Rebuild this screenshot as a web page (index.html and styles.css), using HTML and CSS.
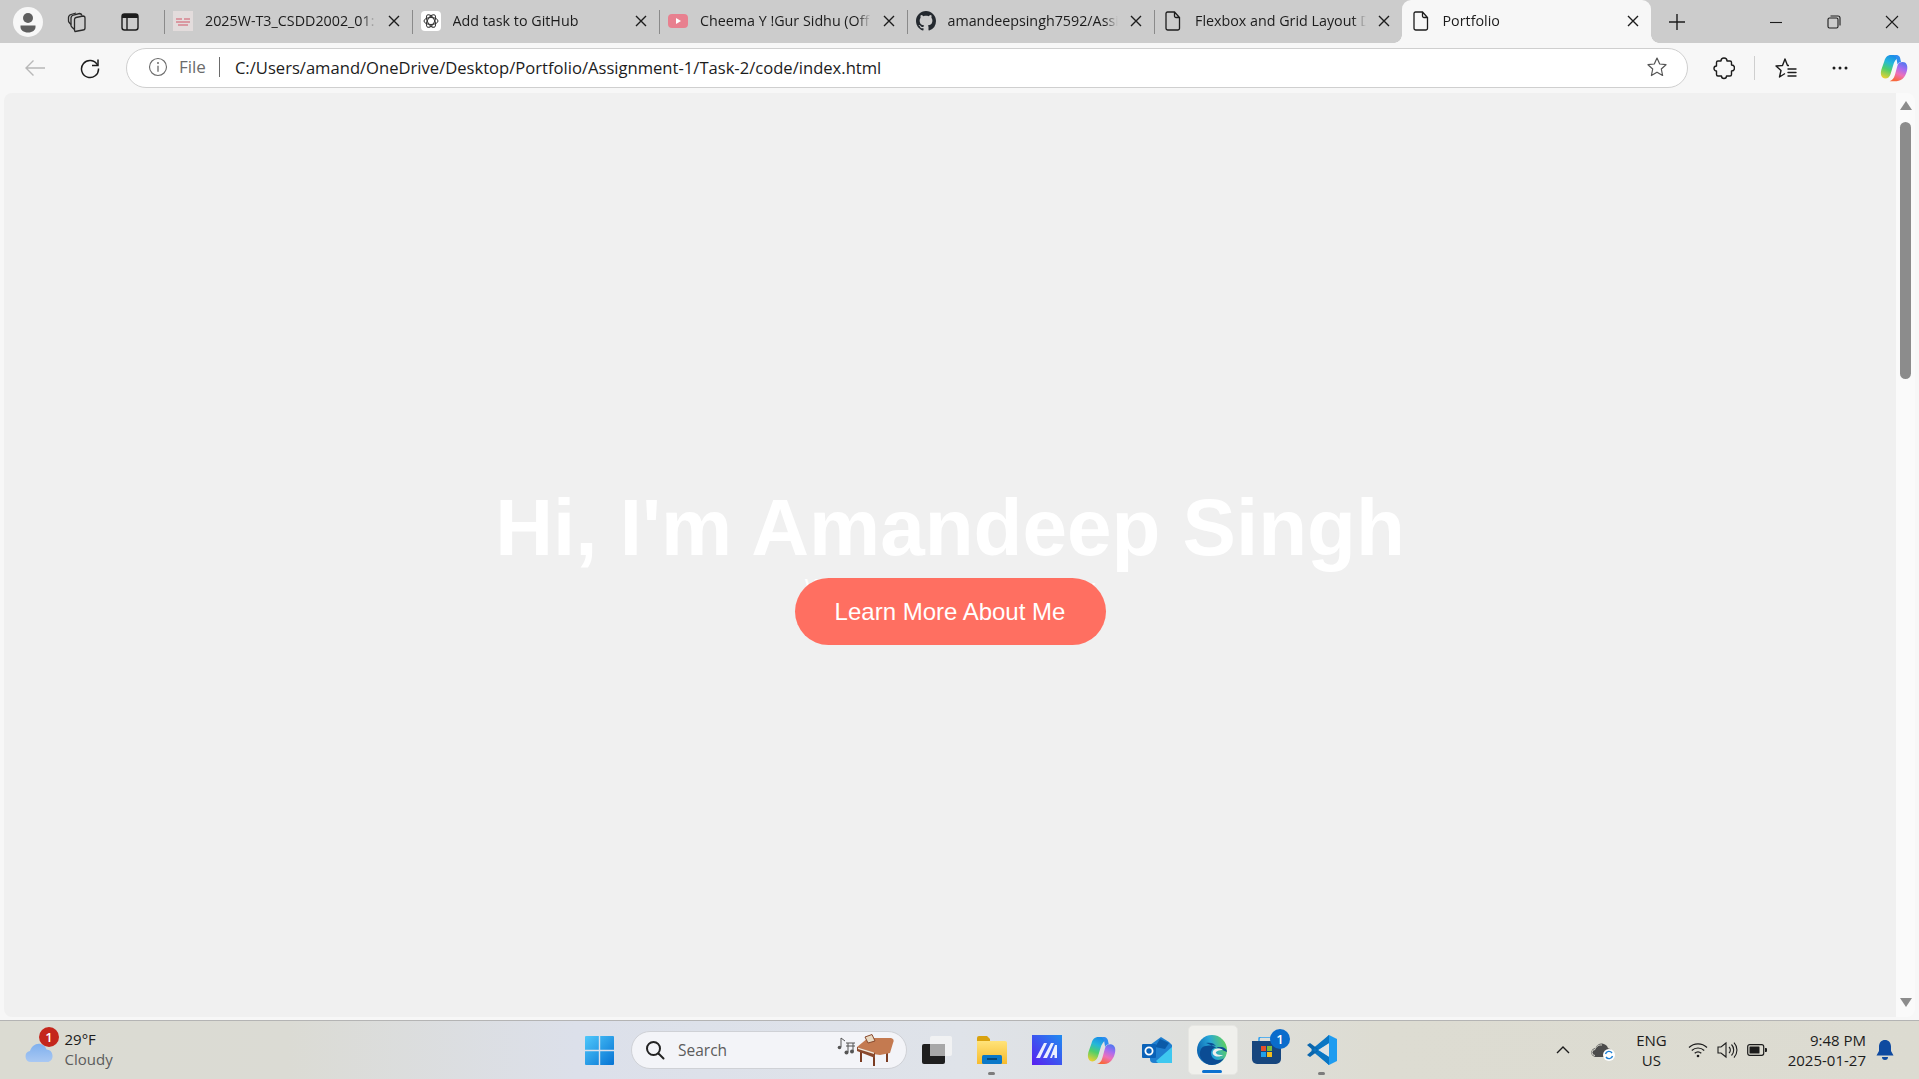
FILE: index.html
```html
<!DOCTYPE html>
<html lang="en">

<head>
    <meta charset="UTF-8">
    <title>Portfolio</title>
    <link rel="stylesheet" href="styles.css">
</head>

<body>
    <svg class="defs" width="0" height="0">
        <defs>
            <symbol id="doc" viewBox="0 0 16 20">
                <path d="M2.500 1h7l5 5.500v10.700a1.800 1.800 0 0 1-1.800 1.800H2.800A1.800 1.800 0 0 1 1 17.200V2.500A1.500 1.500 0 0 1 2.500 1zM9.500 1v4a1.500 1.500 0 0 0 1.500 1.500h3.500" fill="none" stroke="#1c1c1c" stroke-width="1.300" />
            </symbol>
            <symbol id="close" viewBox="0 0 12 12">
                <path d="M1 1l10 10M11 1L1 11" stroke="#1c1c1c" stroke-width="1.400" fill="none" />
            </symbol>
            <linearGradient id="copA" x1="0.500" y1="0" x2="0.200" y2="1">
                <stop offset="0" stop-color="#1a8fe8" />
                <stop offset="0.300" stop-color="#25b8d8" />
                <stop offset="0.600" stop-color="#4fcf6a" />
                <stop offset="1" stop-color="#f0d030" />
            </linearGradient>
            <linearGradient id="copB" x1="0.800" y1="0" x2="0.400" y2="1">
                <stop offset="0" stop-color="#4a78f0" />
                <stop offset="0.350" stop-color="#a86cf0" />
                <stop offset="0.650" stop-color="#ee70b8" />
                <stop offset="1" stop-color="#f8683a" />
            </linearGradient>
            <symbol id="copilot" viewBox="0 0 32 32">
                <path d="M13 1C8 1 6 4 5 8L1.500 18C0 24 2 28 6 28c3 0 5-2 6-5l3-10c1-4 3-7 6-9-1-2-3-3-5-3z" fill="url(#copA)" />
                <path d="M26 9c4 0 6 4 5 9-1 6-5 13-12 13h-8c3-1 5-3 6-7l3-11c1-3 3-4 6-4z" fill="url(#copB)" />
                <path d="M16 1h3c2 0 3.500 1.500 4 3.500L24 9c-2 0-3 1-4 3l-1-6c-.500-2-1.500-4-3-5z" fill="#2f8df0" />
            </symbol>
            <linearGradient id="winLogo" x1="0" y1="0" x2="1" y2="1">
                <stop offset="0" stop-color="#4fc8fb" />
                <stop offset="1" stop-color="#0673d3" />
            </linearGradient>
            <linearGradient id="edgeRing" x1="0" y1="0.600" x2="1" y2="0.300">
                <stop offset="0" stop-color="#0d63b0" />
                <stop offset="0.500" stop-color="#27a6d8" />
                <stop offset="1" stop-color="#63d25a" />
            </linearGradient>
            <linearGradient id="folder" x1="0" y1="0" x2="0" y2="1">
                <stop offset="0" stop-color="#ffe37a" />
                <stop offset="1" stop-color="#f7bb2c" />
            </linearGradient>
            <linearGradient id="genApp" x1="1" y1="0" x2="0" y2="1">
                <stop offset="0" stop-color="#1f8cf0" />
                <stop offset="1" stop-color="#5a1ff0" />
            </linearGradient>
            <linearGradient id="cloudFill" x1="0" y1="0" x2="0" y2="1">
                <stop offset="0" stop-color="#7fb0ee" />
                <stop offset="1" stop-color="#a9c8f3" />
            </linearGradient>
        </defs>
    </svg>

    <header class="tabstrip">
        <div class="avatar">
            <svg width="30" height="30" viewBox="0 0 30 30">
                <circle cx="15" cy="15" r="15" fill="#f7f7f7" />
                <circle cx="15" cy="11" r="5" fill="#5f5f5f" />
                <path d="M7.500 18.500h15v1.500c0 3-3 5.500-7.500 5.500S7.500 23 7.500 20z" fill="#5f5f5f" />
            </svg>
        </div>
        <div class="strip-btn">
            <svg width="22" height="22" viewBox="0 0 22 22" fill="none" stroke="#2a2a2a" stroke-width="1.300">
                <path d="M9 20.500l8-1.500a2 2 0 0 0 2-2V7a2 2 0 0 0-2-2l-7 1.500a2 2 0 0 0-1.500 2v10.500c0 1 .500 1.500.500 1.500z" />
                <path d="M8.500 18.500L5.800 16a2 2 0 0 1-.800-1.500V7c0-2 1-2.500 2.500-3l6-1.500c1.500 0 2 .500 2.500 2" />
                <path d="M5 13.500l-2-2.300a2 2 0 0 1-.500-1.500V6.500c0-1.500 1-2.500 2.500-3l5-1.500" />
            </svg>
        </div>
        <div class="strip-btn">
            <svg width="20" height="20" viewBox="0 0 20 20">
                <rect x="2" y="2" width="16" height="16" rx="2.500" fill="none" stroke="#1c1c1c" stroke-width="1.400" />
                <path d="M2 4.500A2.500 2.500 0 0 1 4.500 2h11A2.500 2.500 0 0 1 18 4.500V6H2z" fill="#1c1c1c" />
                <path d="M7 6v12" stroke="#1c1c1c" stroke-width="1.400" />
            </svg>
        </div>

        <div class="tab">
            <svg class="favicon" width="20" height="20" viewBox="0 0 20 20">
                <rect width="20" height="20" fill="#e3dcdc" />
                <path d="M3 8h6M11 8h6M3 11h14M5 14h10" stroke="#d8838f" stroke-width="1.300" />
            </svg>
            <span class="tab-title">2025W-T3_CSDD2002_01:</span>
            <svg class="tab-close"><use href="#close" /></svg>
        </div>
        <div class="tab">
            <svg class="favicon" width="20" height="20" viewBox="0 0 20 20">
                <rect width="20" height="20" rx="4" fill="#fff" />
                <g fill="none" stroke="#333" stroke-width="1">
                    <ellipse cx="10" cy="10" rx="7" ry="3.500" />
                    <ellipse cx="10" cy="10" rx="7" ry="3.500" transform="rotate(60 10 10)" />
                    <ellipse cx="10" cy="10" rx="7" ry="3.500" transform="rotate(120 10 10)" />
                </g>
            </svg>
            <span class="tab-title">Add task to GitHub</span>
            <svg class="tab-close"><use href="#close" /></svg>
        </div>
        <div class="tab">
            <svg class="favicon" width="20" height="20" viewBox="0 0 20 20">
                <rect y="3" width="20" height="14" rx="4" fill="#e8808f" />
                <path d="M8 7l5 3-5 3z" fill="#fff" />
            </svg>
            <span class="tab-title">Cheema Y !Gur Sidhu (Off</span>
            <svg class="tab-close"><use href="#close" /></svg>
        </div>
        <div class="tab">
            <svg class="favicon" width="20" height="20" viewBox="0 0 16 16">
                <path fill="#24292f" d="M8 0C3.580 0 0 3.580 0 8c0 3.540 2.290 6.530 5.470 7.590.4.070.55-.17.55-.38 0-.19-.01-.82-.01-1.490-2.010.37-2.530-.49-2.690-.94-.09-.23-.48-.94-.82-1.130-.28-.15-.68-.52-.01-.53.63-.01 1.080.58 1.230.82.72 1.210 1.870.87 2.330.66.07-.52.28-.87.51-1.070-1.780-.2-3.640-.89-3.640-3.950 0-.87.31-1.590.82-2.150-.08-.2-.36-1.020.08-2.120 0 0 .67-.21 2.200.82.64-.18 1.320-.27 2-.27.68 0 1.360.09 2 .27 1.530-1.040 2.200-.82 2.200-.82.44 1.100.16 1.920.08 2.120.51.56.82 1.270.82 2.150 0 3.070-1.870 3.750-3.650 3.950.29.25.54.73.54 1.480 0 1.070-.01 1.930-.01 2.200 0 .21.15.46.55.38A8.013 8.013 0 0016 8c0-4.420-3.580-8-8-8z" />
            </svg>
            <span class="tab-title">amandeepsingh7592/Assi</span>
            <svg class="tab-close"><use href="#close" /></svg>
        </div>
        <div class="tab">
            <svg class="favicon doc-icon"><use href="#doc" /></svg>
            <span class="tab-title">Flexbox and Grid Layout D</span>
            <svg class="tab-close"><use href="#close" /></svg>
        </div>
        <div class="tab active">
            <svg class="favicon doc-icon"><use href="#doc" /></svg>
            <span class="tab-title">Portfolio</span>
            <svg class="tab-close"><use href="#close" /></svg>
        </div>

        <div class="new-tab">
            <svg width="18" height="18" viewBox="0 0 18 18">
                <path d="M9 1v16M1 9h16" stroke="#1c1c1c" stroke-width="1.400" />
            </svg>
        </div>

        <div class="window-btns">
            <svg width="14" height="14" viewBox="0 0 14 14">
                <path d="M1 7.500h12" stroke="#1c1c1c" stroke-width="1.100" />
            </svg>
            <svg width="14" height="14" viewBox="0 0 14 14" fill="none" stroke="#1c1c1c" stroke-width="1.100">
                <rect x="1" y="3" width="10" height="10" rx="1.500" />
                <path d="M3.500 1h7.500a2 2 0 0 1 2 2v7.500" />
            </svg>
            <svg width="14" height="14" viewBox="0 0 14 14">
                <path d="M1 1l12 12M13 1L1 13" stroke="#1c1c1c" stroke-width="1.100" />
            </svg>
        </div>
    </header>

    <div class="toolbar">
        <div class="nav-btn back">
            <svg width="22" height="18" viewBox="0 0 22 18" fill="none" stroke="#b8b8b8" stroke-width="1.400">
                <path d="M21 9H2M9.500 1.500L2 9l7.500 7.500" />
            </svg>
        </div>
        <div class="nav-btn reload">
            <svg width="22" height="22" viewBox="0 0 22 22" fill="none" stroke="#1c1c1c" stroke-width="1.500">
                <path d="M18.500 8A8.500 8.500 0 1 0 19.500 11.500" />
                <path d="M19 2.500V8.500H13" />
            </svg>
        </div>
        <div class="address">
            <svg class="info" width="20" height="20" viewBox="0 0 20 20">
                <circle cx="10" cy="10" r="8.500" fill="none" stroke="#6b6b6b" stroke-width="1.100" />
                <path d="M10 8.800v6" stroke="#6b6b6b" stroke-width="1.300" />
                <circle cx="10" cy="6" r="1" fill="#6b6b6b" />
            </svg>
            <span class="scheme">File</span>
            <span class="url">C:/Users/amand/OneDrive/Desktop/Portfolio/Assignment-1/Task-2/code/index.html</span>
            <svg class="star" width="22" height="22" viewBox="0 0 22 22">
                <path d="M11 2l2.700 6 6.300.7-4.700 4.300 1.300 6.500-5.600-3.300-5.600 3.300 1.300-6.500L2 8.700 8.300 8z" fill="none" stroke="#555" stroke-width="1.200" stroke-linejoin="round" />
            </svg>
        </div>
        <div class="tool extensions">
            <svg width="22" height="24" viewBox="0 0 22 24" fill="none" stroke="#1c1c1c" stroke-width="1.400" stroke-linejoin="round">
                <path d="M8 5a3 3 0 0 1 6 0h3a1.500 1.500 0 0 1 1.500 1.500V9a3 3 0 0 1 0 6v3.500A1.500 1.500 0 0 1 17 20h-3.500a2.500 2.500 0 0 1-5 0H5a1.500 1.500 0 0 1-1.500-1.500V15a2.500 2.500 0 0 1 0-5V6.500A1.500 1.500 0 0 1 5 5z" />
            </svg>
        </div>
        <span class="tool-sep"></span>
        <div class="tool favorites">
            <svg width="24" height="24" viewBox="0 0 24 24" fill="none" stroke="#1c1c1c" stroke-width="1.400" stroke-linejoin="round">
                <path d="M15 9.500h-1.500L11 3 8.500 9.500 2 10l5 4.500L5.500 21l5.500-3.500" />
                <path d="M14 13h8M14 16.500h8M14 20h8" stroke-linecap="round" />
            </svg>
        </div>
        <div class="tool more">
            <svg width="18" height="6" viewBox="0 0 18 6" fill="#1c1c1c">
                <circle cx="3" cy="3" r="1.500" />
                <circle cx="9" cy="3" r="1.500" />
                <circle cx="15" cy="3" r="1.500" />
            </svg>
        </div>
        <div class="tool">
            <svg width="28" height="30"><use href="#copilot" /></svg>
        </div>
    </div>

    <div class="viewport">
        <main class="hero">
            <h1>Hi, I'm Amandeep Singh</h1>
            <p class="tagline">Web Developer &amp; Designer</p>
            <button class="cta">Learn More About Me</button>
        </main>
        <div class="scrollbar">
            <span class="arrow up"></span>
            <span class="thumb"></span>
            <span class="arrow down"></span>
        </div>
    </div>

    <footer class="taskbar">
        <div class="weather">
            <div class="weather-icon">
                <svg width="30" height="22" viewBox="0 0 30 22">
                    <path d="M6 21a5.500 5.500 0 0 1-1-10.900C6.500 5 11 2 15.500 3c3 .6 5 2.500 6 5.500a6.500 6.500 0 0 1 2 12.500z" fill="url(#cloudFill)" />
                </svg>
                <span class="weather-badge">1</span>
            </div>
            <div class="weather-text">
                <span class="temp">29°F</span>
                <span class="sky">Cloudy</span>
            </div>
        </div>

        <div class="center">
            <svg class="start" width="29" height="29" viewBox="0 0 29 29" fill="url(#winLogo)">
                <path d="M1 0h12.800v13.800H0V1a1 1 0 0 1 1-1zM15.200 0H28a1 1 0 0 1 1 1v12.800H15.200zM0 15.200h13.800V29H1a1 1 0 0 1-1-1zM15.200 15.200H29V28a1 1 0 0 1-1 1H15.200z" />
            </svg>
            <div class="search">
                <svg width="20" height="20" viewBox="0 0 20 20" fill="none" stroke="#222" stroke-width="2">
                    <circle cx="8.500" cy="8.500" r="6.500" />
                    <path d="M13.500 13.500l5 5" stroke-linecap="round" />
                </svg>
                <span class="search-label">Search</span>
                <svg class="piano" width="60" height="34" viewBox="0 0 60 34">
                    <g fill="none" stroke="#555" stroke-width="1">
                        <path d="M6 14V5l4 3M11 10h9M11 13h9M13 10v9M18 10v8" />
                    </g>
                    <circle cx="4.500" cy="14.500" r="1.800" fill="#555" />
                    <circle cx="11.500" cy="19.500" r="2" fill="#555" />
                    <circle cx="17" cy="18.500" r="2" fill="#555" />
                    <path d="M26 18v11M39 23v10M52 20v9" stroke="#7b3c22" stroke-width="2" />
                    <path d="M22 14L33 5h23q4 1 2 5l-3 10-10 2-7-1-16-4z" fill="#c47a50" />
                    <path d="M22 14l18 6v5L22 18z" fill="#8a4a2e" />
                    <path d="M23 14.500l16 5v1.500l-16-5z" fill="#f0e6d8" />
                    <path d="M30 4l7-2.500L40 8l-7 2z" fill="#e8d9c2" stroke="#8a4a2e" stroke-width="1" />
                </svg>
            </div>
            <div class="apps">
                <div class="app">
                    <svg width="30" height="28" viewBox="0 0 30 28">
                        <rect y="8" width="23" height="20" rx="2" fill="#1f1f1f" />
                        <rect x="8" width="22" height="20" rx="2" fill="#f4f4f4" fill-opacity="0.850" />
                        <rect x="8" y="8" width="15" height="12" fill="#a8a8a8" />
                    </svg>
                </div>
                <div class="app running">
                    <svg width="30" height="28" viewBox="0 0 30 28">
                        <path d="M0 2a2 2 0 0 1 2-2h8l3 3h0v3H0z" fill="#d9a20f" />
                        <path d="M0 5h28a2 2 0 0 1 2 2v21H0z" fill="url(#folder)" />
                        <rect x="5" y="19" width="20" height="9" rx="1.500" fill="#0b78c8" />
                        <path d="M10 23h10" stroke="#08395f" stroke-width="1.500" />
                    </svg>
                </div>
                <div class="app">
                    <svg width="30" height="30" viewBox="0 0 30 30">
                        <rect width="30" height="30" fill="url(#genApp)" />
                        <path d="M4 23L12 8h3L8 23zM11 23l8-15h3L15 23zM18 23l5-13h2v13h-2.500v-3h-1.500l-1 3z" fill="#fff" opacity="0.900" />
                    </svg>
                </div>
                <div class="app">
                    <svg width="31" height="29"><use href="#copilot" /></svg>
                </div>
                <div class="app">
                    <svg width="30" height="26" viewBox="0 0 30 26">
                        <path d="M8 8l11-8 8 5 3 3v18H12a4 4 0 0 1-4-4z" fill="#1f7fd0" />
                        <path d="M18 2l9 4-4 6-10-2z" fill="#0b5aa8" />
                        <path d="M14 24l16-14v16H16z" fill="#3ec8f0" />
                        <rect y="7" width="14" height="14" rx="1" fill="#0a62b8" />
                        <circle cx="7" cy="14" r="3.600" fill="none" stroke="#fff" stroke-width="1.800" />
                    </svg>
                </div>
                <div class="app edge">
                    <svg width="30" height="30" viewBox="0 0 30 30">
                        <circle cx="15" cy="15" r="15" fill="url(#edgeRing)" />
                        <path d="M30 17c0-3-3-5-7-5-5 0-9 2-9 6 0 4 3 7 7 7 3 0 5-1 6-2-2 4-7 7-12 7-2 0-4-.500-6-1.500C4 25 1 20 4 14c1-2 3-3 5-3 4-1 8-1 10 0-2-3-6-4-10-3" fill="#0b4c94" />
                        <path d="M26 15c-3-2-8-2-10 1-1 2 0 4 2 5 3 1 6 .500 8-1-3 0-6 0-7-2-1-1.500 3-3 7-3z" fill="#f0f0ec" />
                    </svg>
                </div>
                <div class="app store">
                    <svg width="29" height="27" viewBox="0 0 29 27">
                        <path d="M7 5V2a2 2 0 0 1 2-2h11a2 2 0 0 1 2 2v3" fill="none" stroke="#2ea1f2" stroke-width="1.500" />
                        <path d="M0 4h29v18a5 5 0 0 1-5 5H5a5 5 0 0 1-5-5z" fill="#17467e" />
                        <rect x="9" y="9" width="5" height="5" fill="#e8502a" />
                        <rect x="15" y="9" width="5" height="5" fill="#7dbb3c" />
                        <rect x="9" y="15" width="5" height="5" fill="#21a0ea" />
                        <rect x="15" y="15" width="5" height="5" fill="#f5bc1c" />
                    </svg>
                    <span class="store-badge">1</span>
                </div>
                <div class="app running">
                    <svg width="30" height="30" viewBox="0 0 30 30">
                        <path d="M22 0l8 4v22l-8 4-14-13z" fill="#1f9cf0" />
                        <path d="M22 0v30L8 17z" fill="#1f9cf0" />
                        <path d="M22 8L11 15l11 7z" fill="#e0e2e2" />
                        <path d="M22 0L4 15l18 15 0-8L11 15 22 8z" fill="#0b75c2" />
                        <path d="M0 10l3-2 8 6-3 3zM0 20l3 2 8-6-3-3z" fill="#0a66ad" />
                    </svg>
                </div>
            </div>
        </div>

        <div class="tray">
            <svg class="chevron" width="14" height="8" viewBox="0 0 14 8">
                <path d="M1 7l6-6 6 6" fill="none" stroke="#1c1c1c" stroke-width="1.400" />
            </svg>
            <div class="onedrive">
                <svg width="21" height="14" viewBox="0 0 21 14">
                    <path d="M5 14a4.500 4.500 0 0 1-.5-9C6 1.500 9 0 12 .700c3 .7 4.500 2.500 5 4.500a4.500 4.500 0 0 1 0 8.800z" fill="#4c4c4c" />
                    <path d="M4 12.500a3 3 0 0 1 0-6c1-3 4-5 7-4.500" fill="none" stroke="#dcdcd2" stroke-width="1" />
                </svg>
                <svg class="sync" width="12" height="12" viewBox="0 0 12 12">
                    <circle cx="6" cy="6" r="6" fill="#fff" />
                    <path d="M2.500 5a3.600 3.600 0 0 1 6.500-1M9.500 7a3.600 3.600 0 0 1-6.500 1" fill="none" stroke="#1a7fd6" stroke-width="1.400" />
                </svg>
            </div>
            <div class="lang">
                <span>ENG</span>
                <span>US</span>
            </div>
            <div class="status">
                <svg width="20" height="16" viewBox="0 0 20 16" fill="none" stroke="#1c1c1c" stroke-width="1.200">
                    <path d="M1 5.500a13 13 0 0 1 18 0M3.800 8.500a9 9 0 0 1 12.400 0M6.700 11.300a5 5 0 0 1 6.600 0" />
                    <circle cx="10" cy="14" r="1.300" fill="#1c1c1c" stroke="none" />
                </svg>
                <svg width="21" height="18" viewBox="0 0 21 18" fill="none" stroke="#1c1c1c" stroke-width="1.100">
                    <path d="M1 6h3l5-4v14l-5-4H1z" />
                    <path d="M12 6a4 4 0 0 1 0 6M14.500 3.500a8 8 0 0 1 0 11M17 1.500a11 11 0 0 1 0 15" />
                </svg>
                <svg width="20" height="12" viewBox="0 0 20 12">
                    <rect x="0.700" y="0.700" width="16" height="10.600" rx="2" fill="none" stroke="#1c1c1c" stroke-width="1.200" />
                    <rect x="2.500" y="2.500" width="10" height="7" rx="0.500" fill="#1c1c1c" />
                    <path d="M18 4h1a1 1 0 0 1 1 1v2a1 1 0 0 1-1 1h-1z" fill="#1c1c1c" />
                </svg>
            </div>
            <div class="clock">
                <span>9:48 PM</span>
                <span>2025-01-27</span>
            </div>
            <svg class="bell" width="18" height="20" viewBox="0 0 18 20" fill="#0f4aa0">
                <path d="M9 0c3.500 0 6 2.700 6 6.500V11l2.500 4.500H.5L3 11V6.500C3 2.700 5.500 0 9 0z" />
                <path d="M6 17h6a3 3 0 0 1-6 0z" />
            </svg>
        </div>
    </footer>
</body>

</html>
```

FILE: styles.css
```css
* {
    box-sizing: border-box;
}

html,
body {
    height: 100%;
}

body {
    margin: 0;
    display: flex;
    flex-direction: column;
    overflow: hidden;
    font-family: "Open Sans", "Noto Sans", sans-serif;
    color: #1c1c1c;
    background-color: #f7f7f7;
}

.defs {
    position: absolute;
}

/* tab strip */
.tabstrip {
    display: flex;
    align-items: center;
    height: 43px;
    flex-shrink: 0;
    background-color: #cccccc;
}

.avatar {
    display: flex;
    margin-left: 13px;
    width: 37px;
}

.strip-btn {
    display: flex;
    justify-content: center;
    width: 53px;
}

.tab {
    position: relative;
    display: flex;
    align-items: center;
    width: 247.500px;
    height: 43px;
    padding: 0 12px 2px 9px;
    font-size: 14.300px;
}

.strip-btn + .tab {
    margin-left: 8px;
}

.tab::before {
    content: "";
    position: absolute;
    left: 0;
    top: 10px;
    width: 1px;
    height: 24px;
    background-color: #8a8a8a;
}

.favicon {
    flex-shrink: 0;
    width: 20px;
    height: 20px;
    margin-right: 12px;
}

.doc-icon {
    width: 16px;
    height: 20px;
    margin: 0 14px 0 2px;
}

.tab-title {
    flex: 1;
    overflow: hidden;
    white-space: nowrap;
    -webkit-mask-image: linear-gradient(to right, #000 92%, transparent 100%);
    mask-image: linear-gradient(to right, #000 92%, transparent 100%);
}

.tab-close {
    flex-shrink: 0;
    width: 12px;
    height: 12px;
    margin-left: 12px;
}

.tab.active {
    width: 249px;
    padding-left: 11px;
    background-color: #f7f7f7;
    border-radius: 9px 9px 0 0;
}

/* flared bottom corners of the active tab */
.tab.active::before,
.tab.active::after {
    content: "";
    position: absolute;
    top: auto;
    bottom: 0;
    width: 8px;
    height: 8px;
}

.tab.active::before {
    left: -8px;
    background: radial-gradient(circle at 0 0, transparent 7.500px, #f7f7f7 8px);
}

.tab.active::after {
    right: -8px;
    background: radial-gradient(circle at 100% 0, transparent 7.500px, #f7f7f7 8px);
}

.tab.active .doc-icon {
    margin: 0 14px 0 0;
}

.new-tab {
    display: flex;
    margin-left: 17px;
}

.window-btns {
    display: flex;
    align-items: center;
    gap: 44px;
    margin-left: auto;
    margin-right: 20px;
}

/* toolbar */
.toolbar {
    display: flex;
    align-items: center;
    height: 50px;
    flex-shrink: 0;
    background-color: #f7f7f7;
}

.nav-btn {
    display: flex;
}

.back {
    margin-left: 24px;
}

.reload {
    margin-left: 33px;
}

.address {
    display: flex;
    align-items: center;
    width: 1562px;
    height: 40px;
    margin-left: 25px;
    padding: 0 19px 2px 21px;
    background-color: #fff;
    border: 1px solid #cfcfcf;
    border-radius: 20px;
    font-size: 16.600px;
}

.scheme {
    margin-left: 11px;
    padding-right: 13px;
    border-right: 1px solid #6b6b6b;
    font-size: 17px;
    line-height: 20px;
    color: #6b6b6b;
}

.url {
    margin-left: 15px;
    white-space: nowrap;
}

.star {
    margin-left: auto;
}

.tool {
    display: flex;
    justify-content: center;
}

.extensions {
    margin-left: 25px;
}

.tool-sep {
    width: 1px;
    height: 24px;
    margin: 0 19px;
    background-color: #cfcfcf;
}

.more {
    margin: 0 31px 0 33px;
}

/* page area */
.viewport {
    display: flex;
    flex: 1;
    min-height: 0;
    margin: 0 4px 3px;
}

.hero {
    display: flex;
    flex: 1;
    flex-direction: column;
    align-items: center;
    padding: 389px 0 0;
    background-color: #f0f0f0;
    border-radius: 8px 0 0 8px;
}

.hero h1 {
    margin: 0;
    font-family: "Liberation Sans", Arial, sans-serif;
    font-size: 80px;
    font-weight: bold;
    color: #fff;
}

/* sits mostly behind the button, only its corners show */
.tagline {
    margin: 0 0 -24px;
    font-family: "Liberation Sans", Arial, sans-serif;
    font-size: 24px;
    line-height: 28px;
    color: #fff;
}

.cta {
    width: 311px;
    height: 67px;
    padding: 0;
    border: none;
    border-radius: 33.500px;
    font-family: "Liberation Sans", Arial, sans-serif;
    font-size: 24px;
    color: #fff;
    background-color: #ff6f61;
}

.scrollbar {
    position: relative;
    display: flex;
    flex-direction: column;
    align-items: center;
    width: 19px;
    padding: 8px 0 10px;
    background-color: #fafafa;
    border-radius: 0 8px 8px 0;
}

.arrow {
    width: 0;
    height: 0;
    border-left: 6px solid transparent;
    border-right: 6px solid transparent;
}

.arrow.up {
    border-bottom: 9px solid #8c8c8c;
}

.arrow.down {
    margin-top: auto;
    border-top: 9px solid #8c8c8c;
}

.thumb {
    width: 11px;
    height: 257px;
    margin-top: 12px;
    background-color: #8c8c8c;
    border-radius: 6px;
}

/* taskbar */
.taskbar {
    display: flex;
    align-items: center;
    height: 59px;
    flex-shrink: 0;
    padding-left: 25px;
    border-top: 1px solid #b4b4b4;
    background: linear-gradient(to right, #dbdbd2 0%, #dbdbd4 15%, #dce0ea 30%, #dfe3e9 50%, #dddcd2 72%, #dcdbd1 100%);
    font-size: 15px;
}

.weather {
    display: flex;
    width: 560px;
    margin-top: -2px;
}

.weather-icon {
    position: relative;
    display: flex;
    align-items: center;
    width: 39.500px;
    height: 38px;
    padding-top: 8px;
}

.weather-badge {
    position: absolute;
    left: 14px;
    top: -2px;
    width: 20px;
    height: 20px;
    border-radius: 50%;
    text-align: center;
    font-size: 13px;
    font-weight: 600;
    line-height: 20px;
    color: #fff;
    background-color: #c4261c;
}

.weather-text {
    display: flex;
    flex-direction: column;
    line-height: 20px;
}

.sky {
    color: #5c5c5c;
}

.center {
    display: flex;
    align-items: center;
}

.search {
    display: flex;
    align-items: center;
    width: 276px;
    height: 38px;
    margin-left: 16.500px;
    padding: 0 11px 0 13px;
    background-color: #f3f4f8;
    border: 1px solid #cfd1d6;
    border-radius: 19px;
    font-size: 15.500px;
    color: #5c5c5c;
}

.search-label {
    margin-left: 13.500px;
}

.piano {
    margin-left: auto;
}

.apps {
    display: flex;
    margin-left: 2.500px;
}

.app {
    position: relative;
    display: flex;
    align-items: center;
    justify-content: center;
    width: 55px;
    height: 48px;
}

.app.running::after {
    content: "";
    position: absolute;
    left: 24px;
    bottom: -1px;
    width: 7px;
    height: 3px;
    border-radius: 2px;
    background-color: #7c7c7c;
}

.edge::before {
    content: "";
    position: absolute;
    left: 3.500px;
    width: 48px;
    height: 48px;
    border: 1px solid #e6e6e2;
    border-radius: 5px;
    background-color: #f0f0ec;
}

.edge svg {
    position: relative;
}

.edge::after {
    content: "";
    position: absolute;
    left: 17.500px;
    bottom: 1px;
    width: 20px;
    height: 3px;
    border-radius: 2px;
    background-color: #0a72d0;
}

.store-badge {
    position: absolute;
    left: 31px;
    top: 3px;
    width: 20px;
    height: 20px;
    border-radius: 50%;
    text-align: center;
    font-size: 13px;
    font-weight: 600;
    line-height: 20px;
    color: #fff;
    background-color: #0a6ccc;
}

.tray {
    display: flex;
    align-items: center;
    margin-left: auto;
    padding-right: 25px;
    font-size: 15px;
}

.onedrive {
    position: relative;
    display: flex;
    margin-left: 21px;
}

.sync {
    position: absolute;
    right: -3px;
    bottom: -4px;
}

.lang,
.clock {
    display: flex;
    flex-direction: column;
    line-height: 20px;
}

.lang {
    align-items: center;
    margin-left: 24px;
}

.status {
    display: flex;
    align-items: center;
    gap: 9px;
    margin-left: 21px;
}

.clock {
    align-items: flex-end;
    margin-left: 21px;
}

.bell {
    margin-left: 10px;
}
```
